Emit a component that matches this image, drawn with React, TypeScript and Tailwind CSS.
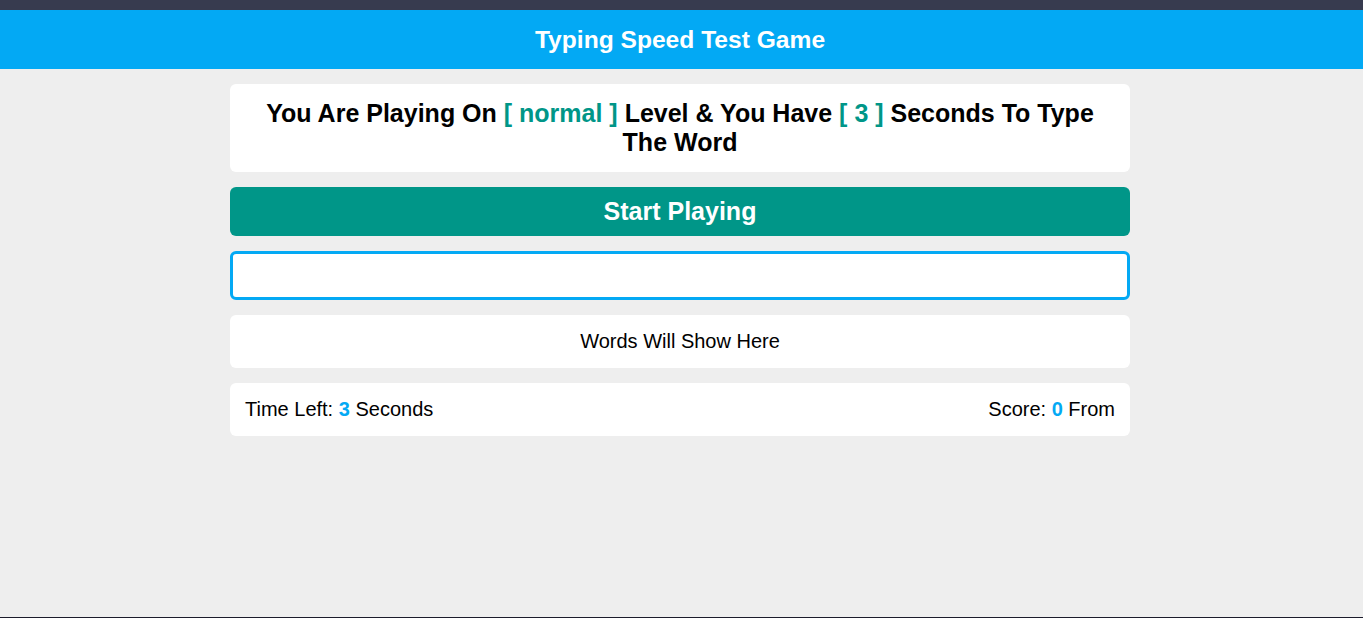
import React, { FC, useState } from "react";

const App: FC = () => {
	const [word, setWord] = useState("");
	const level = "normal";
	const seconds = 3;
	const score = 0;

	return (
		<div className="flex min-h-screen flex-col bg-[#eeeeee] font-['Liberation_Sans',Arial,sans-serif] text-black">
			{/* top strip */}
			<div className="h-[10px] bg-[#373b4f]"></div>
			<header className="flex h-[59px] items-center justify-center bg-[#03a9f4] pt-px pr-[3px]">
				<h1 className="text-[24.6px] font-bold text-white">Typing Speed Test Game</h1>
			</header>

			<main className="flex-1 pr-[3px]">
				<div className="mx-auto flex w-[900px] flex-col gap-[15px] pt-[15px]">
					<div className="rounded-md bg-white p-[15px] text-center text-[25px] leading-[29px] font-bold">
						You Are Playing On <span className="text-[#009688]">[ {level} ]</span> Level &amp; You Have{" "}
						<span className="text-[#009688]">[ {seconds} ]</span> Seconds To Type The Word
					</div>

					<button className="flex h-[49px] items-center justify-center rounded-md bg-[#009688] text-[25px] font-bold text-white">
						Start Playing
					</button>

					<input
						type="text"
						value={word}
						onChange={(e) => setWord(e.target.value)}
						className="h-[49px] rounded-md border-[3px] border-[#03a9f4] bg-white px-3 text-xl outline-none"
					/>

					<div className="rounded-md bg-white p-[15px] text-center text-xl leading-[23px]">
						Words Will Show Here
					</div>

					<div className="flex items-center justify-between rounded-md bg-white p-[15px] text-xl leading-[23px]">
						<span>
							Time Left: <span className="font-bold text-[#03a9f4]">{seconds}</span> Seconds
						</span>
						<span>
							Score: <span className="font-bold text-[#03a9f4]">{score}</span> From
						</span>
					</div>
				</div>
			</main>
			<div className="h-px bg-[#1b1b2b]"></div>
		</div>
	);
};

export default App;
